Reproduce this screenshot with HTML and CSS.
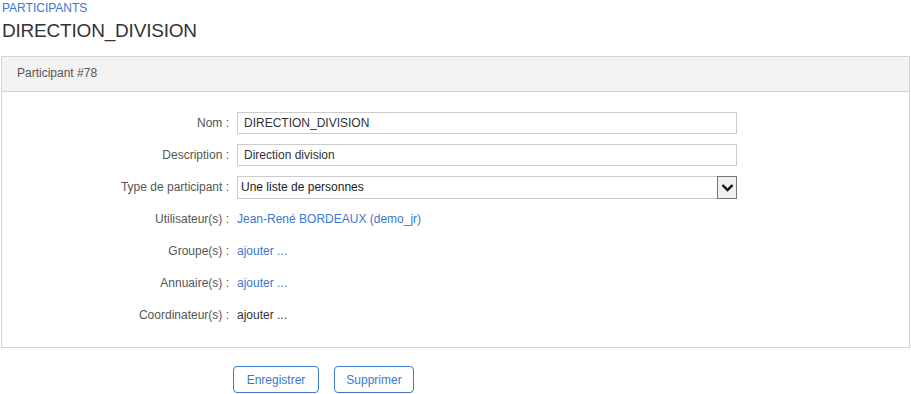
FILE: index.html
```html
<!DOCTYPE html>
<html lang="fr">
<head>
<meta charset="utf-8">
<link rel="stylesheet" href="styles.css">
</head>
<body>
<div class="page">
  <div class="crumb">PARTICIPANTS</div>
  <h1 class="title">DIRECTION_DIVISION</h1>
  <div class="panel">
    <div class="panel-head">Participant #78</div>
    <div class="panel-body">
      <div class="form">
        <div class="label">Nom :</div>
        <div class="field"><div class="input">DIRECTION_DIVISION</div></div>
        <div class="label">Description :</div>
        <div class="field"><div class="input">Direction division</div></div>
        <div class="label">Type de participant :</div>
        <div class="field">
          <div class="select">
            <span class="select-text">Une liste de personnes</span>
            <span class="select-btn"><svg width="13" height="9" viewBox="0 0 13 9"><path d="M1.5 2 L6.5 7 L11.5 2" fill="none" stroke="#111" stroke-width="2.4"/></svg></span>
          </div>
        </div>
        <div class="label">Utilisateur(s) :</div>
        <div class="field"><span class="link">Jean-René BORDEAUX (demo_jr)</span></div>
        <div class="label">Groupe(s) :</div>
        <div class="field"><span class="link">ajouter ...</span></div>
        <div class="label">Annuaire(s) :</div>
        <div class="field"><span class="link">ajouter ...</span></div>
        <div class="label">Coordinateur(s) :</div>
        <div class="field"><span class="plain">ajouter ...</span></div>
      </div>
    </div>
  </div>
  <div class="actions">
    <button class="btn btn-save">Enregistrer</button>
    <button class="btn btn-del">Supprimer</button>
  </div>
</div>
</body>
</html>
```
FILE: styles.css
```css
* { box-sizing: border-box; }
html, body { margin: 0; padding: 0; background: #fff; }
body {
  font-family: "Liberation Sans", Arial, sans-serif;
  font-size: 12px;
  color: #333;
}
.page { padding: 1px 2px 0 1px; width: 911px; }
.crumb {
  color: #3b78d0;
  font-size: 12px;
  line-height: 14px;
  padding-left: 1px;
}
.title {
  margin: 5px 0 0 1px;
  font-size: 19px;
  font-weight: normal;
  color: #333;
  line-height: 22px;
  letter-spacing: -0.2px;
}
.panel {
  margin-top: 14px;
  border: 1px solid #d4d4d4;
  width: 909px;
}
.panel-head {
  background: #f2f2f2;
  border-bottom: 1px solid #d4d4d4;
  height: 35px;
  line-height: 33px;
  padding-left: 15px;
  color: #555;
}
.panel-body { padding: 15px 0 16px; }
.form {
  display: grid;
  grid-template-columns: 227px 500px;
  grid-auto-rows: 32px;
  column-gap: 8px;
  align-items: center;
}
.label { text-align: right; color: #555; }
.input {
  height: 22px;
  border: 1px solid #ccc;
  padding: 0 6px;
  line-height: 20px;
  color: #333;
}
.select {
  height: 23px;
  border: 1px solid #ccc;
  display: flex;
  align-items: stretch;
}
.select-text { flex: 1; padding-left: 3px; line-height: 20px; color: #222; }
.select-btn {
  width: 20px;
  border: 1px solid #777;
  background: #efefef;
  display: flex;
  align-items: center;
  justify-content: center;
  margin: -1px -1px -1px 0;
}
.link { color: #3b78d0; }
.plain { color: #333; }
.actions {
  display: flex;
  gap: 15px;
  padding-left: 232px;
  margin-top: 18px;
}
.btn {
  font-family: "Liberation Sans", Arial, sans-serif;
  font-size: 12px;
  color: #3b78d0;
  background: #fff;
  border: 1px solid #3b78d0;
  border-radius: 4px;
  height: 27px;
  padding: 0;
}
.btn-save { width: 86px; }
.btn-del { width: 80px; }
```
